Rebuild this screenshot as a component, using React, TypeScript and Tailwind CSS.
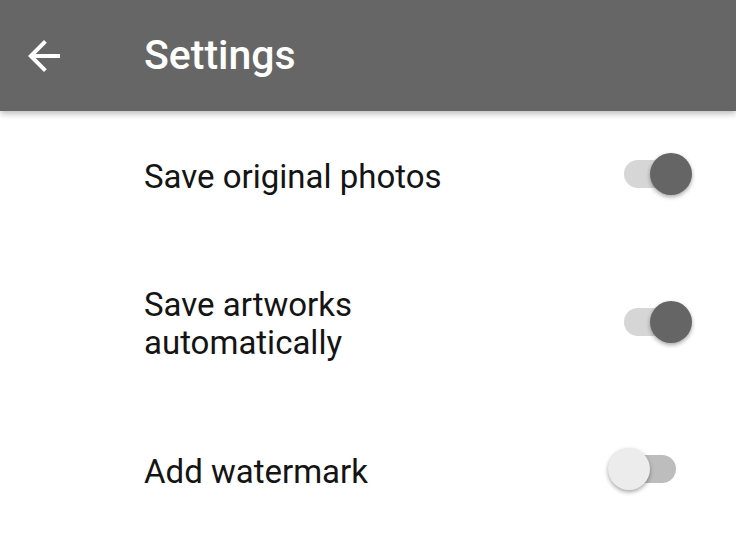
import React from 'react';

const settings = [
  { label: 'Save original photos', on: true },
  { label: 'Save artworks\nautomatically', on: true },
  { label: 'Add watermark', on: false },
];

const Toggle: React.FC<{ on: boolean }> = ({ on }) => (
  <div className="relative mb-[5px] h-[42px] w-[84px] shrink-0">
    <div
      className={`absolute left-[16px] right-[16px] top-[7px] h-[28px] rounded-full ${
        on ? 'bg-[#d6d6d6]' : 'bg-[#bdbdbd]'
      }`}
    />
    <div
      className={`absolute top-0 h-[42px] w-[42px] rounded-full shadow-[0_2px_4px_rgba(0,0,0,0.35)] ${
        on ? 'right-0 bg-[#656565]' : 'left-0 bg-[#ececec]'
      }`}
    />
  </div>
);

export default function App() {
  return (
    <div className="h-[555px] w-[736px] overflow-hidden bg-white font-['Roboto',sans-serif]">
      <header className="relative z-10 flex h-[111px] items-center bg-[#666666] shadow-[0_3px_6px_rgba(0,0,0,0.25)]">
        <svg viewBox="0 0 24 24" className="ml-[20px] h-[48px] w-[48px]" fill="#ffffff">
          <path d="M20 11H7.83l5.59-5.59L12 4l-8 8 8 8 1.41-1.41L7.83 13H20v-2z" />
        </svg>
        <h1 className="ml-[76px] text-[41px] font-medium leading-none text-white">Settings</h1>
      </header>
      <div className="-mt-[1px]">
        {settings.map(s => (
          <div key={s.label} className="flex items-center justify-between py-[43px] pl-[144px] pr-[44px]">
            <span className="whitespace-pre-line text-[33px] leading-[38px] text-[#141414]">{s.label}</span>
            <Toggle on={s.on} />
          </div>
        ))}
      </div>
    </div>
  );
}
